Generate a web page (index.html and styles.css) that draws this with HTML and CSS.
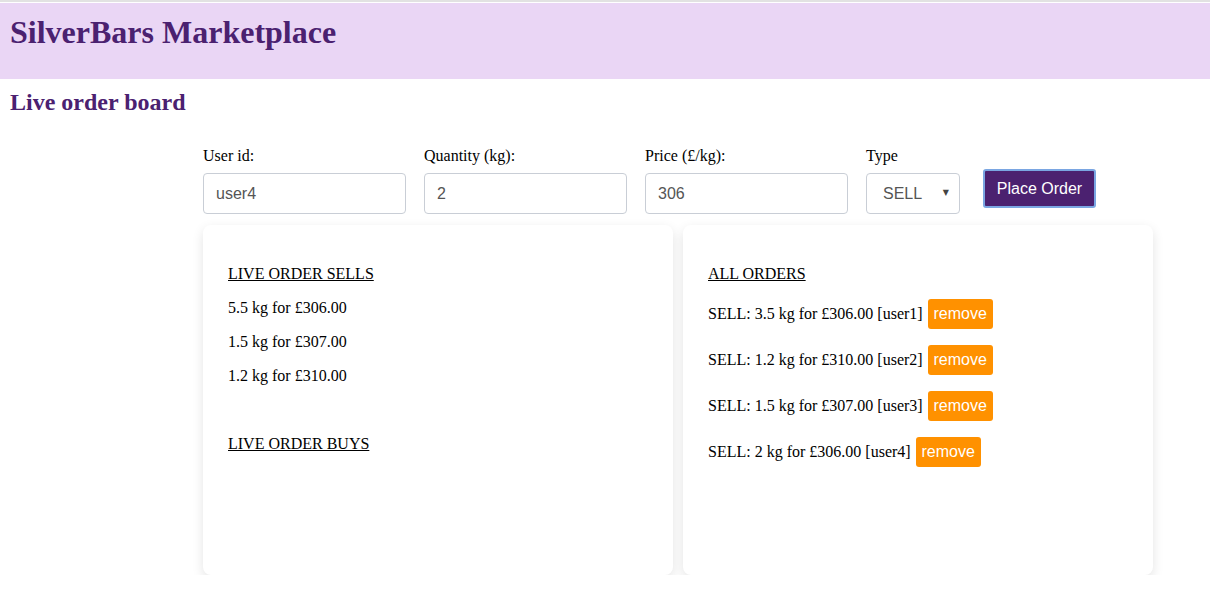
FILE: index.html
```html
<!DOCTYPE html>
<html>
<head>
<meta charset="utf-8">
<title>SilverBars Marketplace</title>
<link rel="stylesheet" href="styles.css">
</head>
<body>
<header class="topbar">
  <h1 class="title">SilverBars Marketplace</h1>
</header>
<h2 class="subtitle">Live order board</h2>
<main class="content">
  <form class="order-form">
    <div class="field">
      <label class="label">User id:</label>
      <input class="input" type="text" value="user4">
    </div>
    <div class="field">
      <label class="label">Quantity (kg):</label>
      <input class="input" type="text" value="2">
    </div>
    <div class="field">
      <label class="label">Price (£/kg):</label>
      <input class="input" type="text" value="306">
    </div>
    <div class="field field-type">
      <label class="label">Type</label>
      <div class="select-wrap">
        <select class="select"><option>SELL</option><option>BUY</option></select>
        <span class="select-arrow">▼</span>
      </div>
    </div>
    <button class="place-btn" type="button">Place Order</button>
  </form>
  <div class="boards">
    <section class="card">
      <p class="heading">LIVE ORDER SELLS</p>
      <p class="line">5.5 kg for £306.00</p>
      <p class="line">1.5 kg for £307.00</p>
      <p class="line">1.2 kg for £310.00</p>
      <p class="heading heading-gap">LIVE ORDER BUYS</p>
    </section>
    <section class="card">
      <p class="heading">ALL ORDERS</p>
      <div class="order-row"><span>SELL: 3.5 kg for £306.00 [user1]</span><button class="remove-btn" type="button">remove</button></div>
      <div class="order-row"><span>SELL: 1.2 kg for £310.00 [user2]</span><button class="remove-btn" type="button">remove</button></div>
      <div class="order-row"><span>SELL: 1.5 kg for £307.00 [user3]</span><button class="remove-btn" type="button">remove</button></div>
      <div class="order-row"><span>SELL: 2 kg for £306.00 [user4]</span><button class="remove-btn" type="button">remove</button></div>
    </section>
  </div>
</main>
</body>
</html>
```
FILE: styles.css
```css
html, body {
  margin: 0;
  padding: 0;
  background: #ffffff;
}
body {
  font-family: "Liberation Serif", "Times New Roman", serif;
  font-size: 16px;
  color: #000;
  border-top: 2px solid #e2e2e2;
}
.topbar {
  background: #ead6f5;
  padding: 11px 10px 28px;
  margin-top: 1px;
}
.title {
  margin: 0;
  font-size: 32px;
  line-height: 37px;
  font-weight: bold;
  color: #4b2170;
}
.subtitle {
  margin: 9px 10px 0;
  font-size: 24px;
  line-height: 28px;
  font-weight: bold;
  color: #4b2170;
}
.content {
  padding: 31px 0 0 203px;
}
.order-form {
  display: flex;
  align-items: flex-end;
  gap: 18px;
}
.field {
  display: flex;
  flex-direction: column;
  gap: 8px;
}
.label {
  line-height: 18px;
  font-size: 16px;
}
.input {
  box-sizing: border-box;
  width: 203px;
  height: 41px;
  border: 1px solid #c9ced6;
  border-radius: 4px;
  padding: 0 12px;
  font-family: "Liberation Sans", Arial, sans-serif;
  font-size: 16px;
  color: #555;
  background: #fff;
  outline: none;
}
.select-wrap {
  position: relative;
  width: 94px;
  height: 41px;
}
.select {
  box-sizing: border-box;
  width: 94px;
  height: 41px;
  -webkit-appearance: none;
  appearance: none;
  border: 1px solid #c9ced6;
  border-radius: 4px;
  padding: 0 0 0 16px;
  font-family: "Liberation Sans", Arial, sans-serif;
  font-size: 16px;
  color: #555;
  background: #fff;
  outline: none;
}
.select-arrow {
  position: absolute;
  right: 11px;
  top: 16px;
  font-size: 8px;
  line-height: 8px;
  color: #444;
  font-family: "DejaVu Sans", sans-serif;
  pointer-events: none;
}
.place-btn {
  box-sizing: border-box;
  margin-left: 5px;
  margin-bottom: 6px;
  width: 113px;
  height: 39px;
  background: #4b2170;
  border: 2px solid #7aa6e2;
  border-radius: 3px;
  color: #fff;
  font-family: "Liberation Sans", Arial, sans-serif;
  font-size: 16px;
  padding: 0;
}
.boards {
  display: flex;
  gap: 10px;
  margin-top: 11px;
}
.card {
  box-sizing: border-box;
  width: 470px;
  height: 350px;
  background: #fff;
  border-radius: 8px;
  box-shadow: 0 4px 12px rgba(0, 0, 0, 0.11);
  padding: 24px 25px;
}
.card p {
  margin: 16px 0;
  line-height: 18px;
}
.heading {
  text-decoration: underline;
}
.heading-gap {
  margin-top: 50px !important;
}
.order-row {
  display: flex;
  align-items: center;
  gap: 5px;
  height: 30px;
  margin-bottom: 16px;
}
.remove-btn {
  box-sizing: border-box;
  width: 65px;
  height: 30px;
  background: #ff9100;
  border: none;
  border-radius: 3px;
  color: #fff;
  font-family: "Liberation Sans", Arial, sans-serif;
  font-size: 16px;
  padding: 0;
}
```
